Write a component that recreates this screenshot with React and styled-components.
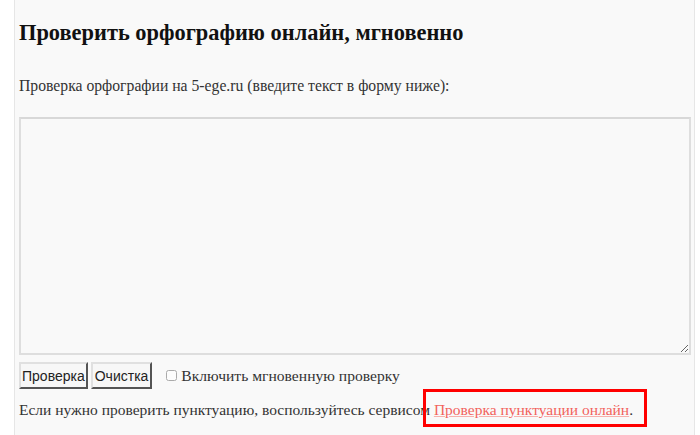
import React from 'react'
import styled, { createGlobalStyle } from 'styled-components'

const GlobalStyle = createGlobalStyle`
  html, body {
    margin: 0;
    padding: 0;
    background: #ffffff;
  }
`

const Page = styled.div`
  margin-left: 14px;
  width: 681px;
  height: 435px;
  box-sizing: border-box;
  border-left: 1px solid #e6e6e6;
  border-right: 1px solid #e6e6e6;
  background: #f9f9f9;
  padding: 0 5px 0 4px;
  font-family: 'Liberation Serif', 'DejaVu Serif', serif;
  color: #333;
  overflow: hidden;
`

const Title = styled.h1`
  margin: 0;
  padding-top: 20px;
  font-size: 22.4px;
  line-height: 26px;
  font-weight: bold;
  color: #111;
`

const Intro = styled.p`
  margin: 30px 0 0;
  font-size: 15.7px;
  line-height: 20px;
`

const TextArea = styled.textarea`
  display: block;
  box-sizing: border-box;
  margin-top: 21px;
  width: 672px;
  height: 238px;
  border: 2px solid #dedede;
  border-top-color: #d8d8d8;
  background: #f9f9f9;
  resize: both;
`

const Controls = styled.div`
  display: flex;
  align-items: center;
  margin-top: 7px;
  height: 27px;
`

const Button = styled.button`
  height: 27px;
  padding: 0 ${props => (props.$wide ? 2 : 1)}px;
  margin-right: 3px;
  font-family: 'Liberation Sans', Arial, sans-serif;
  font-size: 14px;
  color: #222;
  background: #f7f7f7;
  border: 2px outset #e0e0e0;
  border-right-color: #a8a8a8;
  border-bottom-color: #a8a8a8;
  border-radius: 0;
`

const CheckLabel = styled.label`
  display: flex;
  align-items: center;
  margin-left: 11px;
  font-size: 15.6px;
  color: #333;
`

const Check = styled.input`
  width: 11px;
  height: 11px;
  margin: 0 4px 0 0;
  accent-color: #ccc;
  opacity: 0.6;
`

const Note = styled.p`
  margin: 11px 0 0;
  font-size: 15.5px;
  line-height: 20px;
`

const Marked = styled.span`
  position: relative;
`

const MarkBox = styled.span`
  position: absolute;
  left: -11px;
  right: -14px;
  top: -12px;
  bottom: -9px;
  border: 3px solid #ff0000;
  pointer-events: none;
`

const Link = styled.a`
  color: #f2625c;
  text-decoration: underline;
  text-decoration-color: #f7b0ac;
`

export default function App() {
  return (
    <>
      <GlobalStyle />
      <Page>
        <Title>Проверить орфографию онлайн, мгновенно</Title>
        <Intro>Проверка орфографии на 5-ege.ru (введите текст в форму ниже):</Intro>
        <TextArea />
        <Controls>
          <Button>Проверка</Button>
          <Button $wide>Очистка</Button>
          <CheckLabel>
            <Check type="checkbox" />
            Включить мгновенную проверку
          </CheckLabel>
        </Controls>
        <Note>
          Если нужно проверить пунктуацию, воспользуйтесь сервисом{' '}
          <Marked>
            <Link href="#">Проверка пунктуации онлайн</Link>.
            <MarkBox />
          </Marked>
        </Note>
      </Page>
    </>
  )
}
